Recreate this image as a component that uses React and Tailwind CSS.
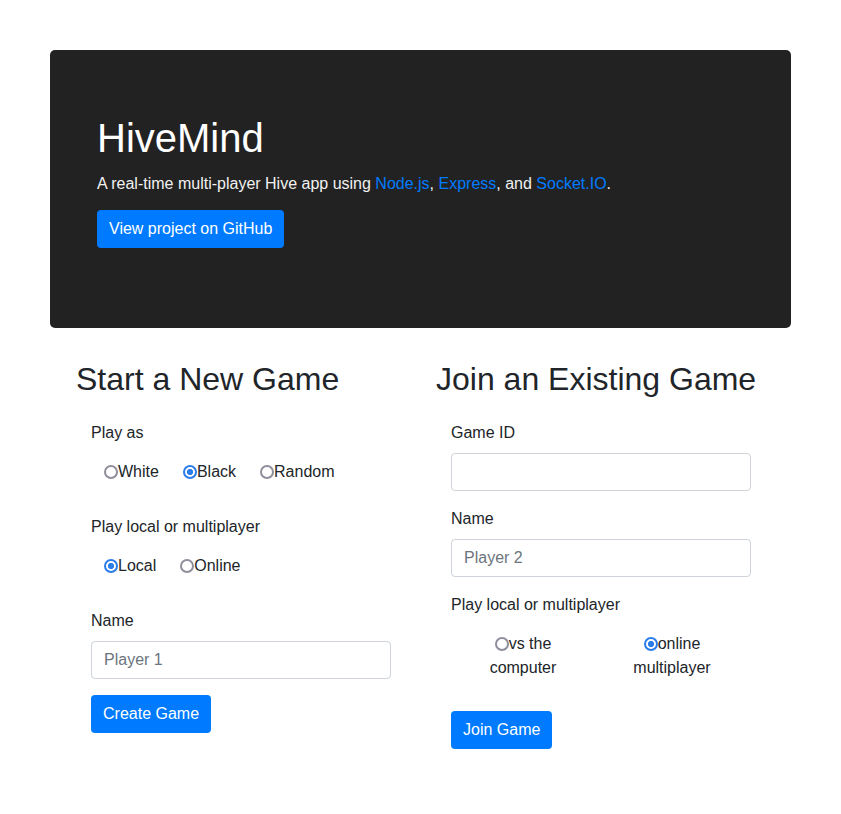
import React from 'react';

const radioCls =
    "appearance-none m-0 w-[14px] h-[14px] shrink-0 rounded-full border-2 border-[#8f8f9d] bg-white checked:border-[#2b7de9] checked:bg-[radial-gradient(circle,#2b7de9_40%,transparent_46%)]";

const Radio = ({ name, label, checked }) => (
    <label className="flex items-center">
        <input type="radio" name={name} defaultChecked={checked} className={radioCls} />
        <span>{label}</span>
    </label>
);

const Field = ({ label, placeholder }) => (
    <div className="mb-4">
        <label className="block mb-2">{label}</label>
        <input
            type="text"
            placeholder={placeholder}
            className="block w-[300px] h-[38px] px-3 py-1.5 rounded border border-[#ced4da] text-[#495057] placeholder:text-[#6c757d] outline-none"
        />
    </div>
);

const Button = ({ children }) => (
    <button className="h-[38px] px-3 rounded bg-[#007bff] text-white leading-6">{children}</button>
);

export default function App() {
    return (
        <div className="min-h-screen bg-white text-[#212529] text-base leading-6 font-['Liberation_Sans',Arial,sans-serif] pt-[50px] px-[50px]">
            {/* Jumbotron */}
            <div className="bg-[#222222] rounded-[5px] pt-16 pb-16 px-[47px] mb-8">
                <h1 className="text-[40px] leading-[48px] font-normal text-white mb-[10px]">HiveMind</h1>
                <p className="text-[#f1f1f1] mb-[14px]">
                    A real-time multi-player Hive app using <a href="#" className="text-[#007bff]">Node.js</a>,{' '}
                    <a href="#" className="text-[#007bff]">Express</a>, and{' '}
                    <a href="#" className="text-[#007bff]">Socket.IO</a>.
                </p>
                <p className="mb-4">
                    <Button>View project on GitHub</Button>
                </p>
            </div>

            <div className="grid grid-cols-[360px_1fr] pl-[26px]">
                {/* Start a new game */}
                <div>
                    <h2 className="text-[32px] leading-[38px] font-normal mb-[23px]">Start a New Game</h2>
                    <div className="pl-[15px]">
                        <label className="block mb-[15px]">Play as</label>
                        <div className="flex pl-[13px] gap-[24px] mb-[31px]">
                            <Radio name="color" label="White" />
                            <Radio name="color" label="Black" checked />
                            <Radio name="color" label="Random" />
                        </div>
                        <label className="block mb-[15px]">Play local or multiplayer</label>
                        <div className="flex pl-[13px] gap-[24px] mb-[31px]">
                            <Radio name="mode" label="Local" checked />
                            <Radio name="mode" label="Online" />
                        </div>
                        <Field label="Name" placeholder="Player 1" />
                        <Button>Create Game</Button>
                    </div>
                </div>

                {/* Join a game */}
                <div>
                    <h2 className="text-[32px] leading-[38px] font-normal mb-[23px]">Join an Existing Game</h2>
                    <div className="pl-[15px]">
                        <Field label="Game ID" placeholder="" />
                        <Field label="Name" placeholder="Player 2" />
                        <label className="block mb-[15px]">Play local or multiplayer</label>
                        <div className="flex ml-[22px] gap-[49px] mb-[31px]">
                            <label className="w-[100px] text-center">
                                <input type="radio" name="join" className={radioCls + " inline-block align-[-2px]"} />
                                vs the computer
                            </label>
                            <label className="w-[100px] text-center">
                                <input type="radio" name="join" defaultChecked className={radioCls + " inline-block align-[-2px]"} />
                                online multiplayer
                            </label>
                        </div>
                        <Button>Join Game</Button>
                    </div>
                </div>
            </div>
        </div>
    );
}
